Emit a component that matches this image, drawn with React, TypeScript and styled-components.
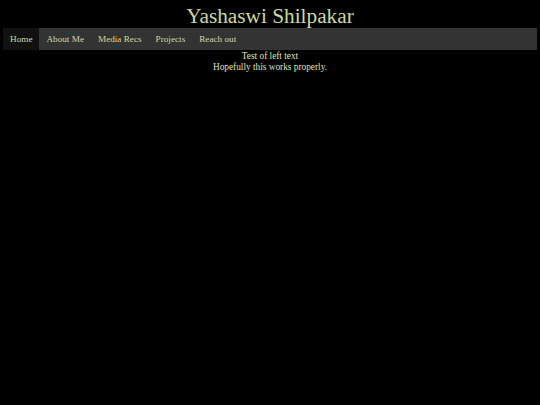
import React from "react";
import styled, { createGlobalStyle } from "styled-components";

const Global = createGlobalStyle`
  html, body { margin: 0; padding: 0; background: #000; }
  body { font-family: "Liberation Serif", "Times New Roman", serif; color: #d3dcb4; }
`;

const Page = styled.div`
  padding: 0 3px;
`;

const Title = styled.h1`
  margin: 0;
  padding-top: 4px;
  height: 24px;
  text-align: center;
  font-weight: normal;
  font-size: 21.3px;
  line-height: 24px;
  color: #c9d9a4;
`;

const Nav = styled.ul`
  list-style: none;
  margin: 0;
  padding: 0;
  display: flex;
  background: #333;
  height: 22px;
`;

const NavItem = styled.li<{ $active?: boolean }>`
  display: flex;
  align-items: center;
  padding: 0 7px;
  font-size: 9.2px;
  color: #c9d9a4;
  background: ${(p) => (p.$active ? "#111" : "transparent")};
`;

const Content = styled.div`
  text-align: center;
  font-size: 9.3px;
  line-height: 11px;
  padding-top: 1px;
  color: #dbe3bd;
`;

export default function App() {
  const items = ["Home", "About Me", "Media Recs", "Projects", "Reach out"];
  return (
    <>
      <Global />
      <Page>
        <Title>Yashaswi Shilpakar</Title>
        <Nav>
          {items.map((it, i) => (
            <NavItem key={it} $active={i === 0}>
              {it}
            </NavItem>
          ))}
        </Nav>
        <Content>
          <div>Test of left text</div>
          <div>Hopefully this works properly.</div>
        </Content>
      </Page>
    </>
  );
}
